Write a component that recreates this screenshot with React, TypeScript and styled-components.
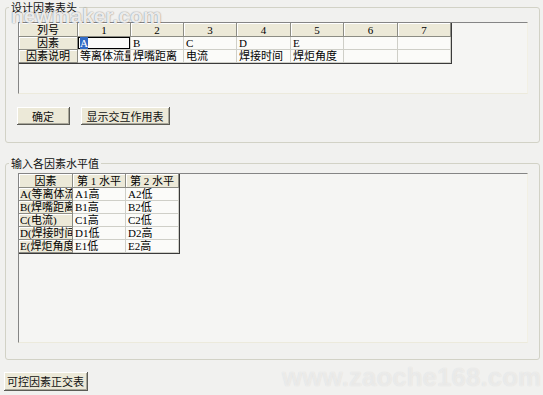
import styled, { createGlobalStyle } from "styled-components";

const GlobalStyle = createGlobalStyle`
    html, body {
        margin: 0;
        padding: 0;
        background: #f1f1ef;
    }
    body {
        font-family: "Liberation Serif", "Noto Sans CJK SC", serif;
        font-size: 11px;
        color: #000;
    }
`;

const Page = styled.div`
    position: relative;
    width: 543px;
    height: 395px;
    overflow: hidden;
    box-sizing: border-box;
    padding: 1px 4px 0 4px;
    display: flex;
    flex-direction: column;
    align-items: flex-start;
`;

const Group = styled.fieldset<{ $top: number; $padTop: number; $bottom: number }>`
    margin: ${(p) => p.$top}px 0 0 1px;
    padding: ${(p) => p.$padTop}px 11px ${(p) => p.$bottom}px 12px;
    width: 535px;
    box-sizing: border-box;
    min-width: 0;
    border: 1px solid #d2d2c6;
    border-radius: 3px;
`;

const Legend = styled.legend`
    margin-left: -9px;
    padding: 0 2px;
    font-family: "Noto Sans CJK SC", sans-serif;
    font-size: 11px;
    line-height: 13px;
    color: #111;
`;

const Panel = styled.div<{ $h: number }>`
    height: ${(p) => p.$h}px;
    box-sizing: border-box;
    background: #f5f5f3;
    border-top: 1px solid #858585;
    border-left: 1px solid #858585;
    border-right: 1px solid #f2f0e4;
    border-bottom: 1px solid #eceadc;
    overflow: hidden;
`;

const Grid = styled.table<{ $w: number }>`
    width: ${(p) => p.$w}px;
    border-collapse: separate;
    border-spacing: 0;
    table-layout: fixed;
    border-right: 1px solid #3a3a3a;
    border-bottom: 1px solid #3a3a3a;
`;

const Col = styled.col<{ $w: number }>`
    width: ${(p) => p.$w}px;
`;

const FixedCell = styled.td<{ $align: "left" | "center"; $h: number }>`
    height: ${(p) => p.$h}px;
    box-sizing: border-box;
    padding: 0 1px;
    background: #ece9d8;
    border-right: 1px solid #8c8c84;
    border-bottom: 1px solid #8c8c84;
    box-shadow: inset 1px 1px 0 #ffffff;
    text-align: ${(p) => p.$align};
    white-space: nowrap;
    overflow: hidden;
    line-height: 12px;
    font-size: 11px;
`;

const DataCell = styled.td<{ $focused?: boolean; $h: number }>`
    height: ${(p) => p.$h}px;
    box-sizing: border-box;
    padding: 0 2px;
    background: #fbfbf9;
    border-right: 1px solid #cfcfc8;
    border-bottom: 1px solid #cfcfc8;
    box-shadow: ${(p) => (p.$focused ? "inset 0 0 0 1px #000" : "none")};
    white-space: nowrap;
    overflow: hidden;
    line-height: 12px;
    font-size: 11px;
`;

const Selected = styled.span`
    background: #316ac5;
    color: #fff;
`;

const ButtonRow = styled.div`
    display: flex;
    gap: 11px;
    margin: 13px 0 0 -1px;
`;

const Button = styled.button<{ $w: number; $h: number }>`
    width: ${(p) => p.$w}px;
    height: ${(p) => p.$h}px;
    padding: 0;
    margin: 0;
    background: #ece9d8;
    border: none;
    border-right: 1px solid #5c5c56;
    border-bottom: 1px solid #5c5c56;
    box-shadow: inset 1px 1px 0 #ffffff, inset -1px -1px 0 #a9a79a;
    font-family: "Noto Sans CJK SC", sans-serif;
    font-size: 11px;
    line-height: 12px;
    white-space: nowrap;
    color: #111;
`;

const BottomButton = styled(Button)`
    margin-top: 12px;
`;

const Watermark = styled.div<{ $x: number; $y: number; $size: number; $alpha: number; $shade: number }>`
    position: absolute;
    left: ${(p) => p.$x}px;
    top: ${(p) => p.$y}px;
    font-family: "Liberation Sans", sans-serif;
    font-weight: bold;
    font-size: ${(p) => p.$size}px;
    color: rgba(255, 255, 255, ${(p) => p.$alpha});
    text-shadow: 0 0 1px rgba(0, 0, 0, ${(p) => p.$shade}), 0 0 2px rgba(0, 0, 0, ${(p) => p.$shade / 2});
    pointer-events: none;
    white-space: nowrap;
`;

const headCols = ["1", "2", "3", "4", "5", "6", "7"];
const factors = ["A", "B", "C", "D", "E", "", ""];
const notes = ["等离体流量", "焊嘴距离", "电流", "焊接时间", "焊炬角度", "", ""];
const widths1 = [59, 53, 53, 53, 54, 53, 54, 53];
const widths2 = [54, 53, 53];

const levels = [
    ["A(等离体流量)", "A1高", "A2低"],
    ["B(焊嘴距离)", "B1高", "B2低"],
    ["C(电流)", "C1高", "C2低"],
    ["D(焊接时间)", "D1低", "D2高"],
    ["E(焊炬角度)", "E1低", "E2高"],
];

const sum = (a: number[]) => a.reduce((s, v) => s + v, 0);

function App() {
    return (
        <>
            <GlobalStyle />
            <Page>
                <Group $top={0} $padTop={8} $bottom={17}>
                    <Legend>设计因素表头</Legend>
                    <Panel $h={72}>
                        <Grid $w={sum(widths1) + 1}>
                            <colgroup>
                                {widths1.map((w, i) => (
                                    <Col key={i} $w={w} />
                                ))}
                            </colgroup>
                            <tbody>
                                <tr>
                                    <FixedCell $align="center" $h={14}>列号</FixedCell>
                                    {headCols.map((c) => (
                                        <FixedCell key={c} $align="center" $h={14}>{c}</FixedCell>
                                    ))}
                                </tr>
                                <tr>
                                    <FixedCell $align="center" $h={13}>因素</FixedCell>
                                    {factors.map((f, i) => (
                                        <DataCell key={i} $h={13} $focused={i === 0}>
                                            {i === 0 ? <Selected>{f}</Selected> : f}
                                        </DataCell>
                                    ))}
                                </tr>
                                <tr>
                                    <FixedCell $align="center" $h={13}>因素说明</FixedCell>
                                    {notes.map((n, i) => (
                                        <DataCell key={i} $h={13}>{n}</DataCell>
                                    ))}
                                </tr>
                            </tbody>
                        </Grid>
                    </Panel>
                    <ButtonRow>
                        <Button $w={53} $h={18}>确定</Button>
                        <Button $w={89} $h={18}>显示交互作用表</Button>
                    </ButtonRow>
                </Group>

                <Group $top={14} $padTop={3} $bottom={16}>
                    <Legend>输入各因素水平值</Legend>
                    <Panel $h={170}>
                        <Grid $w={sum(widths2) + 1}>
                            <colgroup>
                                {widths2.map((w, i) => (
                                    <Col key={i} $w={w} />
                                ))}
                            </colgroup>
                            <tbody>
                                <tr>
                                    <FixedCell $align="center" $h={14}>因素</FixedCell>
                                    <FixedCell $align="center" $h={14}>第 1 水平</FixedCell>
                                    <FixedCell $align="center" $h={14}>第 2 水平</FixedCell>
                                </tr>
                                {levels.map((row) => (
                                    <tr key={row[0]}>
                                        <FixedCell $align="left" $h={13}>{row[0]}</FixedCell>
                                        <DataCell $h={13}>{row[1]}</DataCell>
                                        <DataCell $h={13}>{row[2]}</DataCell>
                                    </tr>
                                ))}
                            </tbody>
                        </Grid>
                    </Panel>
                </Group>

                <BottomButton $w={84} $h={19}>可控因素正交表</BottomButton>

                <Watermark $x={11} $y={4} $size={21} $alpha={0.85} $shade={0.4}>newmaker.com</Watermark>
                <Watermark $x={282} $y={362} $size={26} $alpha={0.45} $shade={0.07}>www.zaoche168.com</Watermark>
            </Page>
        </>
    );
}

export default App;
